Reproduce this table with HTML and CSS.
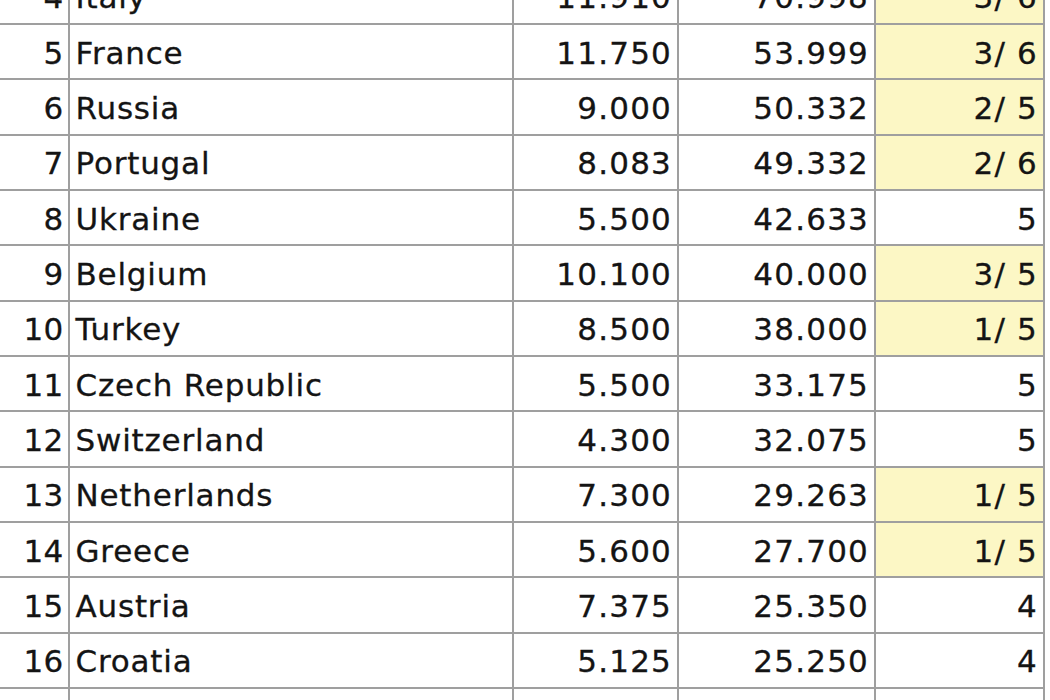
FILE: index.html
```html
<!DOCTYPE html>
<html lang="en">
<head>
<meta charset="utf-8">
<title>Ranking</title>
<link rel="stylesheet" href="styles.css">
</head>
<body>
<div class="table">
  <div class="c rank">4</div><div class="c name">Italy</div><div class="c num">11.910</div><div class="c num">70.998</div><div class="c num hl">3/ 6</div>
  <div class="c rank">5</div><div class="c name">France</div><div class="c num">11.750</div><div class="c num">53.999</div><div class="c num hl">3/ 6</div>
  <div class="c rank">6</div><div class="c name">Russia</div><div class="c num">9.000</div><div class="c num">50.332</div><div class="c num hl">2/ 5</div>
  <div class="c rank">7</div><div class="c name">Portugal</div><div class="c num">8.083</div><div class="c num">49.332</div><div class="c num hl">2/ 6</div>
  <div class="c rank">8</div><div class="c name">Ukraine</div><div class="c num">5.500</div><div class="c num">42.633</div><div class="c num">5</div>
  <div class="c rank">9</div><div class="c name">Belgium</div><div class="c num">10.100</div><div class="c num">40.000</div><div class="c num hl">3/ 5</div>
  <div class="c rank">10</div><div class="c name">Turkey</div><div class="c num">8.500</div><div class="c num">38.000</div><div class="c num hl">1/ 5</div>
  <div class="c rank">11</div><div class="c name">Czech Republic</div><div class="c num">5.500</div><div class="c num">33.175</div><div class="c num">5</div>
  <div class="c rank">12</div><div class="c name">Switzerland</div><div class="c num">4.300</div><div class="c num">32.075</div><div class="c num">5</div>
  <div class="c rank">13</div><div class="c name">Netherlands</div><div class="c num">7.300</div><div class="c num">29.263</div><div class="c num hl">1/ 5</div>
  <div class="c rank">14</div><div class="c name">Greece</div><div class="c num">5.600</div><div class="c num">27.700</div><div class="c num hl">1/ 5</div>
  <div class="c rank">15</div><div class="c name">Austria</div><div class="c num">7.375</div><div class="c num">25.350</div><div class="c num">4</div>
  <div class="c rank">16</div><div class="c name">Croatia</div><div class="c num">5.125</div><div class="c num">25.250</div><div class="c num">4</div>
  <div class="c rank">17</div><div class="c name">Denmark</div><div class="c num">7.700</div><div class="c num">24.875</div><div class="c num">4</div>
</div>
</body>
</html>
```
FILE: styles.css
```css
html, body {
  margin: 0;
  padding: 0;
  background: #ffffff;
  overflow: hidden;
}
body {
  width: 1050px;
  height: 700px;
}
.table {
  display: grid;
  grid-template-columns: 69.5px 442px 163.5px 195px 167px;
  grid-auto-rows: 53.33px;
  gap: 2px;
  padding: 2px;
  background: #9f9f9f;
  width: max-content;
  margin: -32.33px 0 0 -4px;
  font-family: "DejaVu Sans", Verdana, sans-serif;
  font-size: 31px;
  letter-spacing: 1.2px;
  color: #141414;
  -webkit-text-stroke: 0.3px #141414;
}
.c {
  background: #ffffff;
  display: flex;
  align-items: center;
  white-space: nowrap;
  line-height: 1;
  padding-top: 3px;
}
.rank {
  justify-content: flex-end;
  padding-right: 4px;
  letter-spacing: 0.3px;
}
.name {
  padding-left: 6px;
  letter-spacing: 0.8px;
}
.num {
  justify-content: flex-end;
  padding-right: 5px;
}
.hl {
  background: #fcf7c5;
}
```
